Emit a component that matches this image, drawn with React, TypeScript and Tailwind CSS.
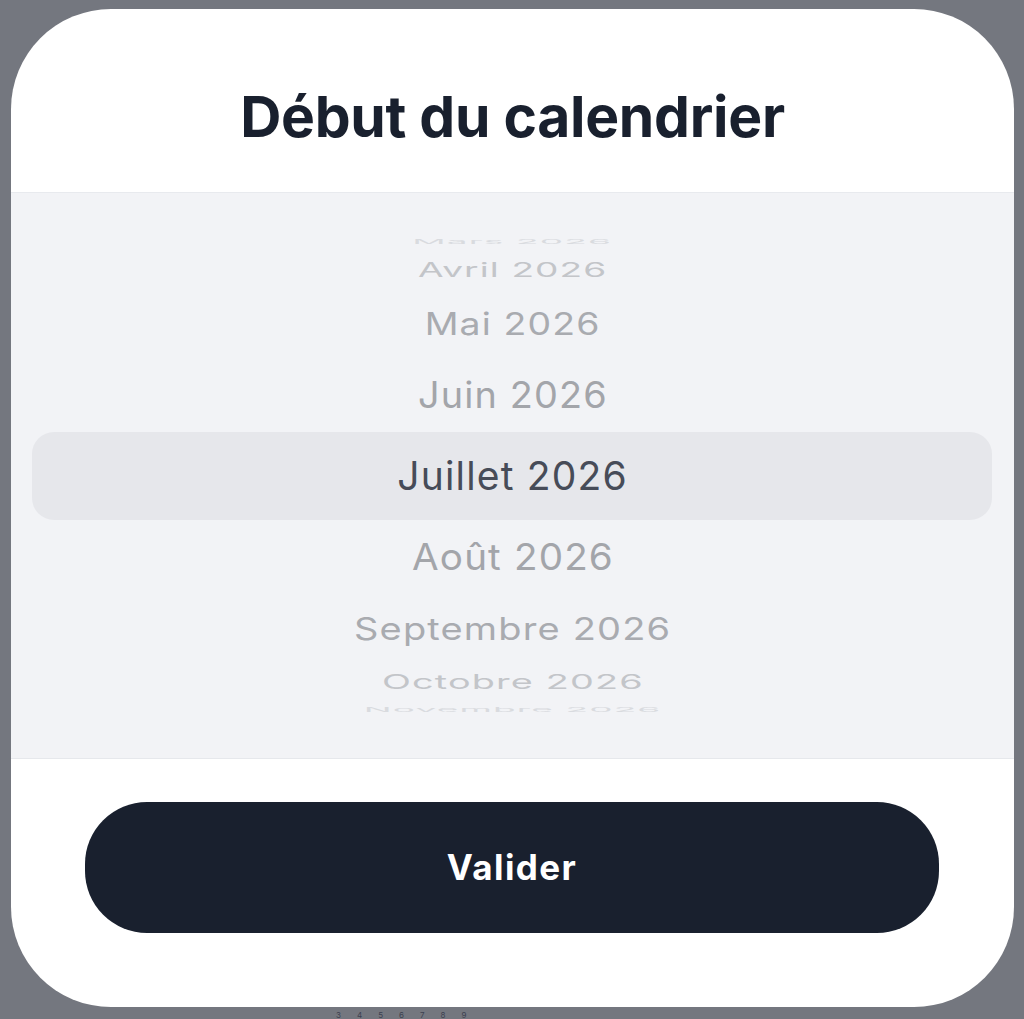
import React from 'react';

// wheel rows, top to bottom; height and squash follow the drum angle (20deg steps)
const wheelRows = [
    { label: 'Mars 2026', row: 'h-[14px]', text: 'scale-x-[0.95] scale-y-[0.17] text-[#d9dbdf]' },
    { label: 'Avril 2026', row: 'h-[42px]', text: 'scale-x-[0.95] scale-y-[0.5] text-[#c3c5c9]' },
    { label: 'Mai 2026', row: 'h-[65px]', text: 'scale-x-[0.96] scale-y-[0.8] text-[#a9abb0]' },
    { label: 'Juin 2026', row: 'h-[78px]', text: 'scale-x-[0.97] scale-y-[0.94] text-[#a3a5aa]' },
    { label: 'Juillet 2026', row: 'h-[84px]', text: 'text-[#474c58]' },
    { label: 'Août 2026', row: 'h-[78px]', text: 'scale-x-[0.99] scale-y-[0.94] text-[#a3a5aa]' },
    { label: 'Septembre 2026', row: 'h-[65px]', text: 'scale-x-[0.975] scale-y-[0.8] text-[#a9abb0]' },
    { label: 'Octobre 2026', row: 'h-[42px]', text: 'scale-x-[0.97] scale-y-[0.5] text-[#c3c5c9]' },
    { label: 'Novembre 2026', row: 'h-[14px]', text: 'scale-x-[0.95] scale-y-[0.17] text-[#d9dbdf]' },
]

function MonthWheel() {
    return (
        <div className='relative h-[566px] bg-[#f2f3f6] border-b border-[#e6e8ec] flex flex-col items-center justify-center overflow-hidden'>
            <div className='absolute left-[21px] right-[22px] top-1/2 -translate-y-1/2 h-[88px] rounded-[22px] bg-[#e6e7eb]'></div>
            {wheelRows.map((item) => (
                <div key={item.label} className={`relative w-full flex items-center justify-center ${item.row}`}>
                    <span className={`block whitespace-nowrap text-[39px] leading-none tracking-[0.03em] ${item.text}`}>
                        {item.label}
                    </span>
                </div>
            ))}
        </div>
    )
}

export default function App() {
    return (
        <div className='w-full h-[1019px] bg-[#74777f] pt-[9px] px-[11px] overflow-hidden font-["Inter","Liberation_Sans",sans-serif]'>
            <section className='w-[1003px] h-[998px] bg-white rounded-[100px] overflow-hidden flex flex-col'>
                <header className='h-[184px] pt-[32px] flex items-center justify-center border-b border-[#e8eaee]'>
                    <h1 className='text-[57px] font-bold tracking-[-0.005em] text-[#19202e]'>Début du calendrier</h1>
                </header>

                <MonthWheel />

                <div className='flex-1 pt-[43px] pl-[74px] pr-[75px]'>
                    <button className='w-full h-[131px] rounded-[62px] bg-[#19202e] text-white text-[35px] font-bold tracking-[0.04em] flex items-center justify-center'>
                        Valider
                    </button>
                </div>
            </section>
            <div className='flex gap-[16px] pl-[325px] pt-[2px] text-[8px] text-[#3c4150]'>
                <span>3</span><span>4</span><span>5</span><span>6</span><span>7</span><span>8</span><span>9</span>
            </div>
        </div>
    )
}
